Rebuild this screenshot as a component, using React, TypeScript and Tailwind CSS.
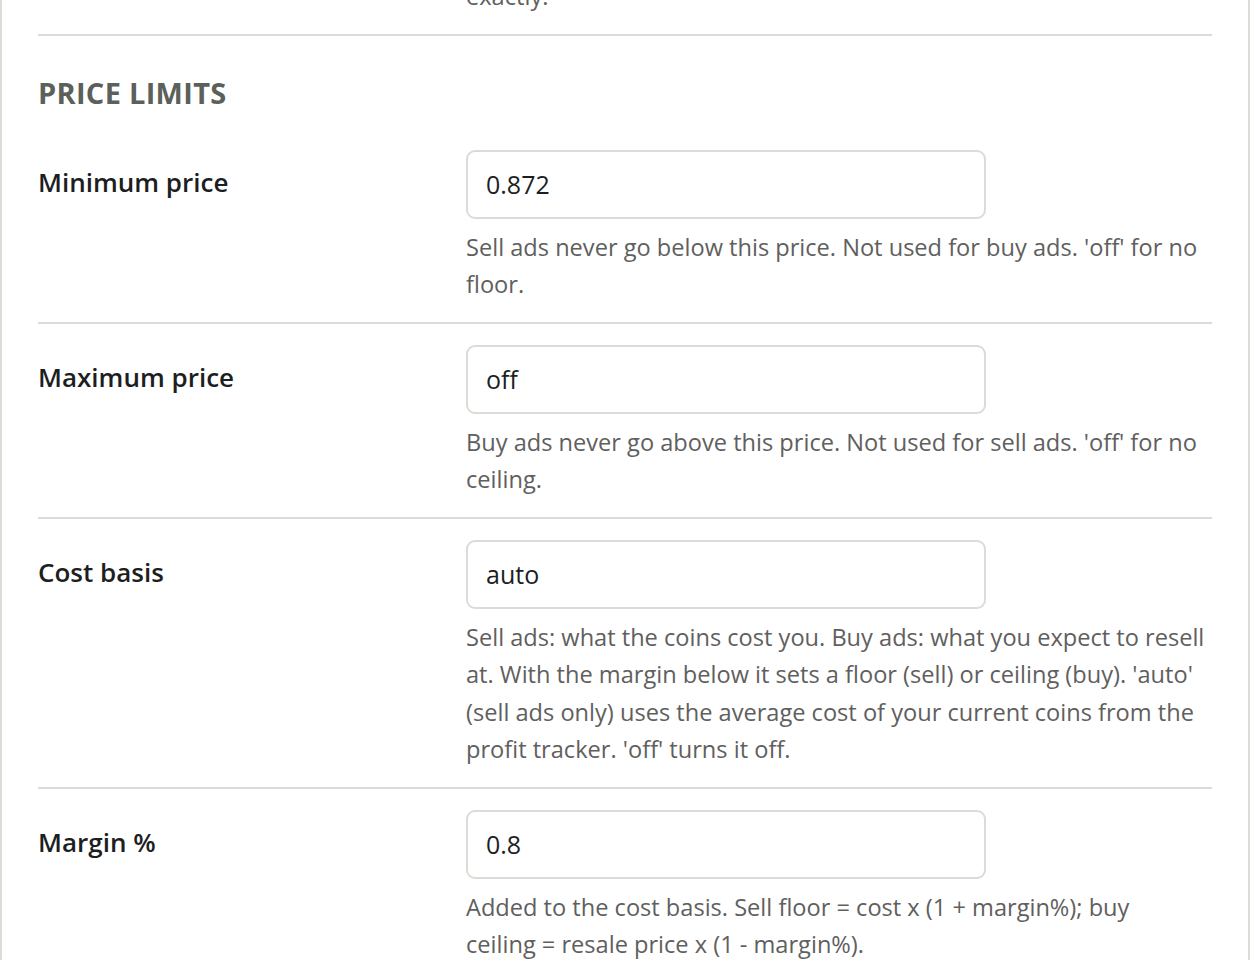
import React from 'react';

interface Field {
  label: string;
  value: string;
  help: string;
}

const FIELDS: Field[] = [
  {
    label: 'Minimum price',
    value: '0.872',
    help: "Sell ads never go below this price. Not used for buy ads. 'off' for no floor.",
  },
  {
    label: 'Maximum price',
    value: 'off',
    help: "Buy ads never go above this price. Not used for sell ads. 'off' for no ceiling.",
  },
  {
    label: 'Cost basis',
    value: 'auto',
    help: "Sell ads: what the coins cost you. Buy ads: what you expect to resell at. With the margin below it sets a floor (sell) or ceiling (buy). 'auto' (sell ads only) uses the average cost of your current coins from the profit tracker. 'off' turns it off.",
  },
  {
    label: 'Margin %',
    value: '0.8',
    help: 'Added to the cost basis. Sell floor = cost x (1 + margin%); buy ceiling\u00a0= resale price x (1 - margin%).',
  },
];

const Row: React.FC<{ field: Field }> = ({ field }) => (
  <div className="flex border-b-2 border-[#dcdcd7] pt-[21px] pb-[18px]">
    <div className="w-[428px] shrink-0 pt-[13px] text-[26px] leading-[39px] font-semibold text-[#1c1e1f]">
      {field.label}
    </div>
    <div className="flex-1 min-w-0">
      <input
        defaultValue={field.value}
        className="block w-[520px] h-[69px] rounded-[9px] border-2 border-[#dcdcd7] bg-white px-[18px] text-[25px] text-[#1c1e1f] outline-none"
      />
      <p className="mt-[10px] text-[23.6px] leading-[37.5px] text-[#5f605e]">{field.help}</p>
    </div>
  </div>
);

export default function App() {
  return (
    <div
      className="h-[960px] overflow-hidden bg-white"
      style={{ fontFamily: '"Open Sans", "Noto Sans", sans-serif' }}
    >
      <div className="min-h-full border-x-2 border-[#dcdcd7] px-[36px]">
        <div className="-mt-[22px] flex border-b-2 border-[#dcdcd7] pb-[18px]">
          <div className="w-[428px] shrink-0" />
          <p className="text-[23.6px] leading-[37.5px] text-[#5f605e]">exactly.</p>
        </div>
        <h3 className="pt-[41px] pb-[20px] text-[29px] leading-[32px] font-bold uppercase tracking-[0.3px] text-[#5b605b]">
          Price limits
        </h3>
        {FIELDS.map((f) => (
          <Row key={f.label} field={f} />
        ))}
      </div>
    </div>
  );
}
